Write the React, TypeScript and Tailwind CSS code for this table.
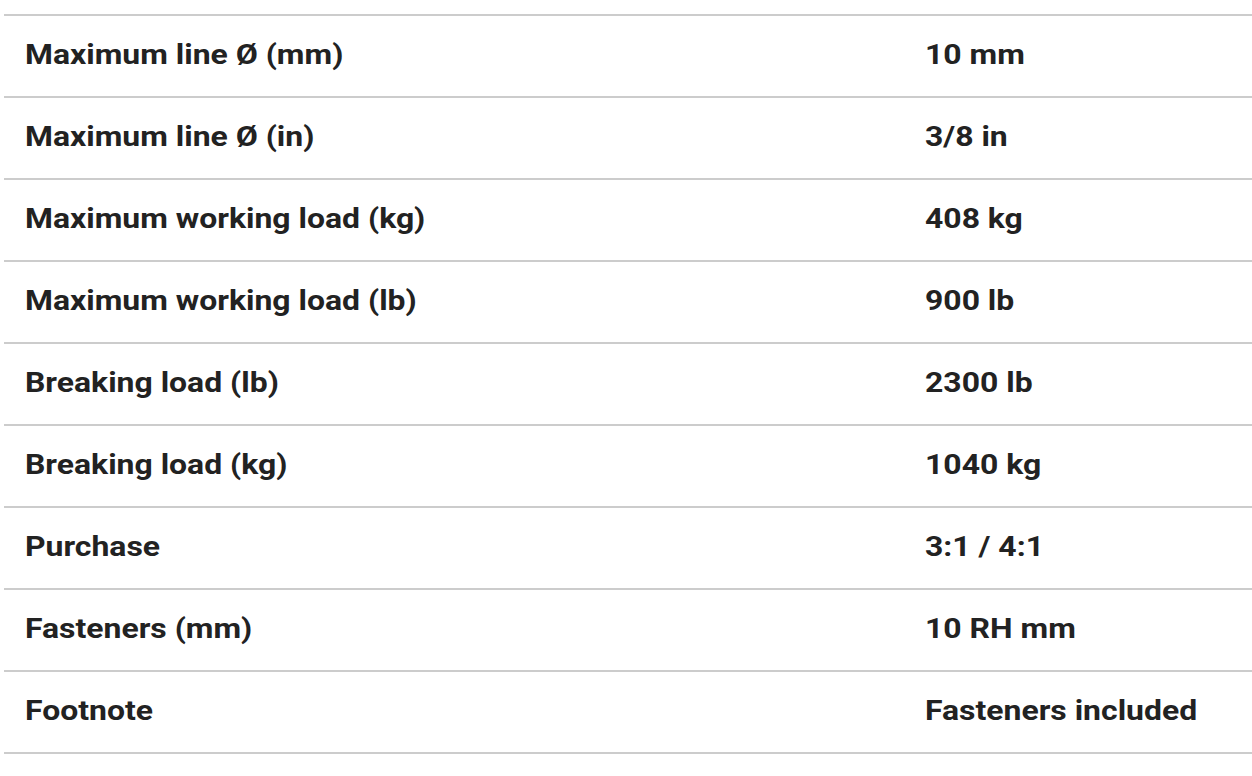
import React from 'react';

const specs = [
  { label: 'Maximum line Ø (mm)', value: '10 mm' },
  { label: 'Maximum line Ø (in)', value: '3/8 in' },
  { label: 'Maximum working load (kg)', value: '408 kg' },
  { label: 'Maximum working load (lb)', value: '900 lb' },
  { label: 'Breaking load (lb)', value: '2300 lb' },
  { label: 'Breaking load (kg)', value: '1040 kg' },
  { label: 'Purchase', value: '3:1 / 4:1' },
  { label: 'Fasteners (mm)', value: '10 RH mm' },
  { label: 'Footnote', value: 'Fasteners included' },
];

const Cell: React.FC<{ text: string }> = ({ text }) => (
  <div className="pl-[21px]">
    <span className="inline-block origin-left scale-x-[1.14] text-[28px] font-bold text-[#222222] leading-none whitespace-nowrap">
      {text}
    </span>
  </div>
);

const App: React.FC = () => {
  return (
    <div className="min-h-screen bg-white pt-[14px] pl-[4px]" style={{ fontFamily: 'Roboto, "Liberation Sans", sans-serif' }}>
      <div className="border-t-2 border-[#cccccc]">
        {specs.map((row) => (
          <div key={row.label} className="grid grid-cols-[900px_1fr] h-[82px] border-b-2 border-[#cccccc] items-center">
            <Cell text={row.label} />
            <Cell text={row.value} />
          </div>
        ))}
      </div>
    </div>
  );
};

export default App;
